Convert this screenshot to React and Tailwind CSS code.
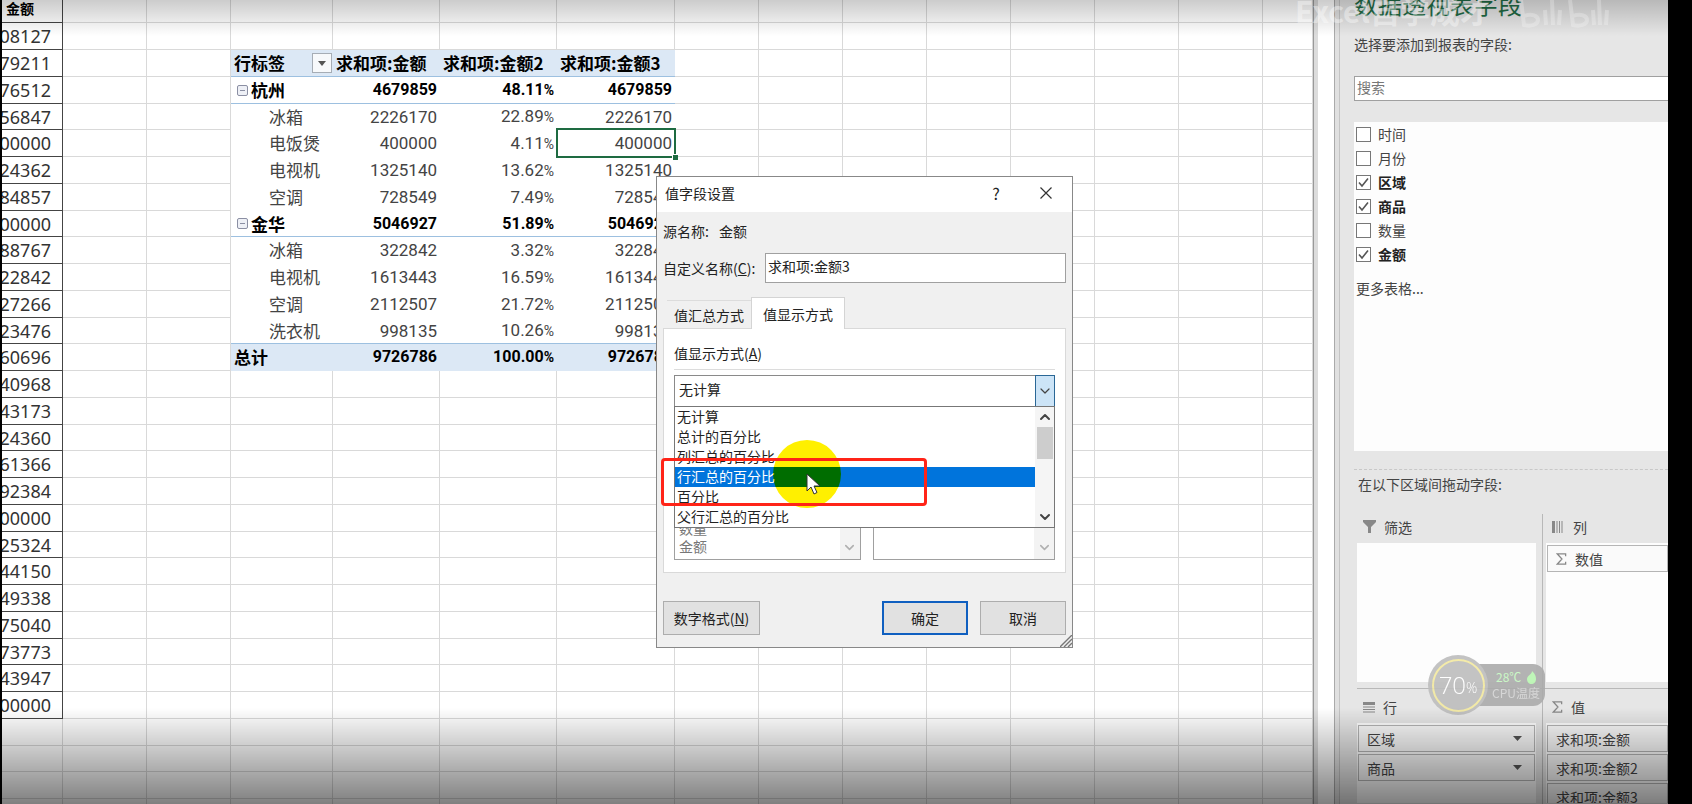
import { ChevronDown, ChevronUp } from "lucide-react";

const amounts = [
  "08127", "79211", "76512", "56847", "00000", "24362", "84857", "00000",
  "88767", "22842", "27266", "23476", "60696", "40968", "43173", "24360",
  "61366", "92384", "00000", "25324", "44150", "49338", "75040", "73773",
  "43947", "00000",
];

const pivot = [
  { label: "杭州", group: true, values: ["4679859", "48.11", "4679859"] },
  { label: "冰箱", values: ["2226170", "22.89", "2226170"] },
  { label: "电饭煲", values: ["400000", "4.11", "400000"], selected: true },
  { label: "电视机", values: ["1325140", "13.62", "1325140"] },
  { label: "空调", values: ["728549", "7.49", "728549"] },
  { label: "金华", group: true, values: ["5046927", "51.89", "5046927"] },
  { label: "冰箱", values: ["322842", "3.32", "322842"] },
  { label: "电视机", values: ["1613443", "16.59", "1613443"] },
  { label: "空调", values: ["2112507", "21.72", "2112507"] },
  { label: "洗衣机", values: ["998135", "10.26", "998135"] },
  { label: "总计", total: true, values: ["9726786", "100.00", "9726786"] },
];

const fields = [
  { name: "时间", checked: false },
  { name: "月份", checked: false },
  { name: "区域", checked: true },
  { name: "商品", checked: true },
  { name: "数量", checked: false },
  { name: "金额", checked: true },
];

const options = [
  "无计算",
  "总计的百分比",
  "列汇总的百分比",
  "行汇总的百分比",
  "百分比",
  "父行汇总的百分比",
];

const cell = "border-r border-b border-[#d9d9d9] p-0";

const EmptyCells = ({ count }) =>
  Array.from({ length: count }, (_, i) => <td key={i} className={cell}></td>);

const PivotHeader = () => (
  <>
    <th className="border-b border-[#9dc0e0] bg-[#dce8f5] p-0 pl-[3px] text-left">
      <div className="flex items-center justify-between">
        <span>行标签</span>
        <button
          aria-label="筛选行标签"
          className="mr-px flex size-5 items-center justify-center border border-[#a6adb5] bg-[#f7f9fb]"
        >
          <svg width="8" height="5" viewBox="0 0 8 5" fill="#555">
            <path d="M0 0h8L4 5z" />
          </svg>
        </button>
      </div>
    </th>
    {["求和项:金额", "求和项:金额2", "求和项:金额3"].map((name) => (
      <th
        key={name}
        className="border-b border-[#9dc0e0] bg-[#dce8f5] p-0 pl-[3px] text-left whitespace-nowrap"
      >
        {name}
      </th>
    ))}
  </>
);

const PivotRow = ({ row, beforeTotal }) => {
  const strong = row.group || row.total;
  let look = "p-0 border-b border-transparent text-[#444]";
  if (row.group) look = "p-0 border-b border-[#9dc0e0] font-bold text-black";
  if (row.total) look = "p-0 border-b border-[#dce8f5] bg-[#dce8f5] font-bold text-black";
  if (beforeTotal) look = "p-0 border-b border-[#9dc0e0] text-[#444]";

  return (
    <>
      <td className={look}>
        {row.group ? (
          <div className="flex items-center gap-[3px] pl-1.5">
            <svg width="11" height="11" viewBox="0 0 11 11" fill="#eef0f6" stroke="#8b8fa3">
              <rect x="0.5" y="0.5" width="10" height="10" rx="1.5" />
              <path d="M3 5.500h5" />
            </svg>
            {row.label}
          </div>
        ) : (
          <div className={row.total ? "pl-[3px]" : "pl-[38px]"}>{row.label}</div>
        )}
      </td>
      {row.values.map((value, i) => (
        <td key={i} className={`${look} relative text-right font-[Roboto]`}>
          <div className={strong ? "pr-[3px] text-base leading-6" : "pr-[3px]"}>
            {value}
            {i === 1 && <span className="text-sm leading-6">%</span>}
          </div>
          {row.selected && i === 2 && (
            <div className="absolute -inset-x-px -top-0.5 -bottom-0.5 border-2 border-[#1e6b41]">
              <span className="absolute -right-1 -bottom-1 size-1.5 border-t border-l border-white bg-[#1e6b41]"></span>
            </div>
          )}
        </td>
      ))}
    </>
  );
};

const Sheet = () => (
  <table className="w-full table-fixed border-separate border-spacing-0 bg-white text-[17px] leading-6">
    <colgroup>
      <col className="w-[61px]" />
      <col className="w-21" />
      <col className="w-21" />
      <col className="w-[102px]" />
      <col className="w-[107px]" />
      <col className="w-[117px]" />
      <col className="w-[118px]" />
      {Array.from({ length: 7 }, (_, i) => (
        <col key={i} className="w-21" />
      ))}
      <col />
    </colgroup>
    <tbody>
      <tr className="h-[23px]">
        <th className="border-r border-b border-[#444] p-0 text-left align-top">
          <div className="pl-1 text-sm leading-4">金额</div>
        </th>
        <EmptyCells count={14} />
      </tr>
      {Array.from({ length: 30 }, (_, i) => (
        <tr key={i} className="h-[27px] [&:nth-child(4n+1)]:h-[26px]">
          {amounts[i] ? (
            <td className="border-r border-b border-[#444] p-0 text-[#333]">
              <div className="flex justify-end overflow-hidden pr-[11px] font-['Noto_Sans'] text-lg leading-6">
                {amounts[i]}
              </div>
            </td>
          ) : (
            <EmptyCells count={1} />
          )}
          <EmptyCells count={2} />
          {i === 1 && <PivotHeader />}
          {pivot[i - 2] && <PivotRow row={pivot[i - 2]} beforeTotal={i === 11} />}
          <EmptyCells count={i > 0 && i < 13 ? 8 : 12} />
        </tr>
      ))}
    </tbody>
  </table>
);

const Dialog = () => (
  <div className="absolute top-44 left-[654px] w-[417px] border border-[#888] bg-[#f0f0f0] pb-3 text-sm leading-5 text-[#222]">
    <div className="flex h-[35px] items-center bg-white pb-1 pl-2">
      <h2 className="flex-1">值字段设置</h2>
      <button className="w-9 text-base">?</button>
      <button aria-label="关闭" className="mr-5 ml-[26px]">
        <svg width="12" height="12" viewBox="0 0 12 12" stroke="#333" strokeWidth="1.2">
          <path d="M0.5 0.5l11 11M11.5 0.5l-11 11" />
        </svg>
      </button>
    </div>
    <div className="px-1.5 pt-[9px]">
      <div className="flex gap-2.5">
        <span>源名称:</span>
        <span>金额</span>
      </div>
      <div className="mt-3 flex items-center gap-2">
        <label htmlFor="name" className="w-[94px] whitespace-nowrap">
          自定义名称(<u>C</u>):
        </label>
        <input
          id="name"
          defaultValue="求和项:金额3"
          className="h-[30px] min-w-0 flex-1 border border-[#a0a0a0] bg-white px-0.5 pb-1"
        />
      </div>
      <div className="mt-3.5 flex items-end pl-1">
        <button className="h-7 border-t border-[#dcdcdc] px-[7px]">值汇总方式</button>
        <button className="-mb-px h-8 border border-b-0 border-[#d4d4d4] bg-white px-[11px]">
          值显示方式
        </button>
      </div>
      <div className="border border-[#d9d9d9] bg-white px-2.5 pt-3.5 pb-3">
        <label htmlFor="show-as" className="block border-b border-[#dcdcdc] pb-1.5">
          值显示方式(<u>A</u>)
        </label>
        <div className="relative mt-[5px]">
          <select
            id="show-as"
            className="block h-8 w-full appearance-none border border-[#8a8a8a] bg-white px-1 pb-1"
          >
            <option>无计算</option>
          </select>
          <span className="pointer-events-none absolute top-0 right-0 flex h-8 w-5 items-center justify-center border border-[#2a6796] bg-[#cce4f7]">
            <ChevronDown size={16} strokeWidth={1.8} color="#444" />
          </span>
          <div className="absolute inset-x-0 top-[31px] z-10 flex border border-[#777] bg-white">
            <ul role="listbox" className="flex-1">
              {options.map((name, i) => (
                <li
                  key={name}
                  role="option"
                  aria-selected={i === 3}
                  className="h-5 px-0.5 leading-[18px] aria-selected:bg-[#0074dc] aria-selected:text-white"
                >
                  {name}
                </li>
              ))}
            </ul>
            <div className="flex w-[19px] flex-col items-center bg-[#f5f5f5]">
              <ChevronUp size={16} strokeWidth={3} color="#444" className="my-0.5" />
              <div className="h-8 w-4 bg-[#cdcdcd]"></div>
              <ChevronDown size={16} strokeWidth={3} color="#444" className="mt-auto mb-0.5" />
            </div>
          </div>
        </div>
        <div className="mt-12 flex gap-3 text-[#777]">
          <ul className="relative flex h-[105px] flex-1 flex-col justify-end border border-[#a0a0a0] pb-1 pl-1 leading-[18px]">
            <li>数量</li>
            <li>金额</li>
            <span className="absolute right-0 bottom-0 flex h-full w-5 items-end justify-center bg-[#f3f3f3] pb-1">
              <ChevronDown size={15} strokeWidth={2.5} color="#b0b0b0" />
            </span>
          </ul>
          <ul className="relative h-[105px] flex-1 border border-[#a0a0a0]">
            <span className="absolute right-0 bottom-0 flex h-full w-5 items-end justify-center bg-[#f3f3f3] pb-1">
              <ChevronDown size={15} strokeWidth={2.5} color="#b0b0b0" />
            </span>
          </ul>
        </div>
      </div>
      <div className="mt-7 flex gap-3">
        <button className="mr-auto h-[34px] w-[97px] border border-[#adadad] bg-[#e1e1e1]">
          数字格式(<u>N</u>)
        </button>
        <button className="h-[34px] w-[86px] border-2 border-[#0f5fc0] bg-[#e1e1e1]">确定</button>
        <button className="h-[34px] w-[86px] border border-[#adadad] bg-[#e1e1e1]">取消</button>
      </div>
    </div>
    <svg
      className="absolute right-0 bottom-0"
      width="12"
      height="12"
      viewBox="0 0 12 12"
      stroke="#777"
      strokeWidth="1.4"
    >
      <path d="M0 12L12 0M4 12l8-8M8 12l4-4" />
    </svg>

    {/* pointer highlight */}
    <div className="absolute top-[263px] left-[116px] z-20 size-[68px] rounded-full bg-[#fff000] mix-blend-multiply"></div>
    <div className="absolute top-[281px] left-1 z-20 h-12 w-[266px] rounded-sm border-3 border-[#ff2418]"></div>
    <svg
      className="absolute top-[296px] left-[149px] z-20"
      width="15"
      height="23"
      viewBox="0 0 15 23"
      fill="white"
      stroke="#333"
    >
      <path d="M1 1v17l4-4 3 7 3-1.500-3-6.500h6z" />
    </svg>
  </div>
);

const AreaItem = ({ children, arrow }) => (
  <li className="flex h-[27px] items-center border border-[#b5b5b5] bg-[#fafafa] px-2">
    {children}
    {arrow && (
      <svg className="mr-1 ml-auto" width="9" height="5" viewBox="0 0 9 5" fill="#555">
        <path d="M0 0h9L4.500 5z" />
      </svg>
    )}
  </li>
);

const Sigma = () => (
  <svg width="11" height="12" viewBox="0 0 12 13" fill="none" stroke="#888" strokeWidth="1.4">
    <path d="M10.500 3.500V1H1.500l5 5.500-5 5.500h9V9.500" />
  </svg>
);

const FieldPanel = () => (
  <aside className="flex w-[328px] shrink-0 flex-col bg-[#e6e6e6] pl-3.5 text-sm leading-5 text-[#444]">
    <h1 className="-mt-3 text-2xl leading-8 text-[#1f6b45]">数据透视表字段</h1>
    <p className="mt-3.5">选择要添加到报表的字段:</p>
    <input
      aria-label="搜索"
      placeholder="搜索"
      className="mt-[22px] h-[25px] border border-r-0 border-[#a0a0a0] bg-white px-0.5 pb-1 placeholder:text-[#777]"
    />
    <div className="mt-[21px] h-[329px] bg-[#fdfdfd] px-0.5">
      {fields.map(({ name, checked }) => (
        <label
          key={name}
          className="flex h-6 items-center gap-[7px] has-checked:font-bold has-checked:text-[#222]"
        >
          <span className="relative flex size-[15px]">
            <input
              type="checkbox"
              defaultChecked={checked}
              className="peer size-[15px] appearance-none border border-[#777] bg-white"
            />
            <svg
              className="pointer-events-none absolute inset-0 hidden peer-checked:block"
              width="15"
              height="15"
              viewBox="0 0 15 15"
              fill="none"
              stroke="#555"
              strokeWidth="1.6"
            >
              <path d="M3 7.500l3 3.500 6-7.500" />
            </svg>
          </span>
          {name}
        </label>
      ))}
      <p className="mt-3">更多表格...</p>
    </div>
    <div className="mt-[18px] border-t border-dashed border-[#c8c8c8] pt-1 pl-1">
      在以下区域间拖动字段:
    </div>
    <div className="mt-5 ml-[3px] grid flex-1 grid-cols-[186px_1fr] grid-rows-[175px_1fr]">
      <section className="border-r border-b border-[#b8b8b8] pr-1.5">
        <h3 className="flex h-[29px] items-center gap-2 pb-1 pl-1.5">
          <svg width="13" height="13" viewBox="0 0 13 13" fill="#888">
            <path d="M0 0h13v2L8 7v6H5V7L0 2z" />
          </svg>
          筛选
        </h3>
        <div className="h-[139px] bg-[#fdfdfd]"></div>
      </section>
      <section className="border-b border-[#b8b8b8] pl-[3px]">
        <h3 className="flex h-[29px] items-center gap-2.5 pb-1 pl-1.5">
          <svg width="11" height="12" viewBox="0 0 11 12" fill="#888">
            <path d="M0 0h3v12H0zM4.500 0h1v12h-1zM7 0h1v12H7zM9.500 0h1v12h-1z" />
          </svg>
          列
        </h3>
        <ul className="h-[139px] bg-[#fdfdfd] pt-0.5 pl-px">
          <AreaItem>
            <span className="mr-2">
              <Sigma />
            </span>
            数值
          </AreaItem>
        </ul>
      </section>
      <section className="border-r border-[#b8b8b8] pr-1.5">
        <h3 className="flex h-[34px] items-center gap-2 pt-0.5 pl-1.5">
          <svg width="12" height="11" viewBox="0 0 12 11" fill="#888">
            <path d="M0 0h12v3H0zM0 4.500h12v1H0zM0 7h12v1H0zM0 9.500h12v1H0z" />
          </svg>
          行
        </h3>
        <ul className="flex h-20 flex-col gap-0.5 bg-[#fdfdfd] px-px pt-0.5">
          <AreaItem arrow>区域</AreaItem>
          <AreaItem arrow>商品</AreaItem>
        </ul>
      </section>
      <section className="pl-[3px]">
        <h3 className="flex h-[34px] items-center gap-2 pt-0.5 pl-1.5">
          <Sigma />
          值
        </h3>
        <ul className="flex h-20 flex-col gap-0.5 overflow-hidden bg-[#fdfdfd] pt-0.5 pl-px *:shrink-0">
          <AreaItem>求和项:金额</AreaItem>
          <AreaItem>求和项:金额2</AreaItem>
          <AreaItem>求和项:金额3</AreaItem>
        </ul>
      </section>
    </div>
  </aside>
);

const CpuWidget = () => (
  <div className="absolute top-[655px] right-[123px] flex items-center opacity-90">
    <div className="z-10 flex size-[60px] items-center justify-center rounded-full bg-[#bdbdbd]">
      <div className="flex size-[53px] items-center justify-center rounded-full border-2 border-[#f3e9a0] font-['Open_Sans'] text-2xl font-light text-white">
        70<span className="mt-1.5 text-sm">%</span>
      </div>
    </div>
    <div className="-ml-6 flex h-[42px] w-[81px] flex-col justify-center rounded-r-xl bg-[#ababab] pl-7 text-xs leading-4 text-[#d4d4d4]">
      <span className="flex items-center gap-1.5 pl-1 text-[#c5f7c0]">
        28℃
        <svg width="9" height="13" viewBox="0 0 9 13" fill="#b8f5b0">
          <path d="M5 0c3 3 4 5 4 8 0 3-2 5-4.500 5S0 11 0 8c0-2 1.500-3 3-4.500C4 2.500 5 1.500 5 0z" />
        </svg>
      </span>
      <span className="whitespace-nowrap">CPU温度</span>
    </div>
  </div>
);

const Watermark = () => (
  <div className="pointer-events-none absolute -top-2 right-[58px] flex items-end gap-7 text-3xl leading-9 font-bold whitespace-nowrap text-white/40">
    <span>Excel自学成才</span>
    <svg
      width="92"
      height="30"
      viewBox="0 0 92 30"
      fill="none"
      stroke="white"
      strokeOpacity="0.25"
      strokeWidth="4"
    >
      <path d="M3 2l3 25c8 2 14-1 14-5s-6-7-14-4M27 12l1 15M34 2l1 25M42 12l-1 15" />
      <path d="M52 2l3 25c8 2 14-1 14-5s-6-7-14-4M75 12l1 15M81 2l1 25M89 12l-1 15" />
    </svg>
  </div>
);

const App = () => {
  return (
    <div className="relative flex h-screen overflow-hidden border-l-2 border-black bg-black font-['Noto_Sans_CJK_SC',sans-serif]">
      <main className="relative flex min-w-0 flex-1 overflow-hidden bg-white">
        <div className="min-w-0 flex-1">
          <Sheet />
        </div>
        <div className="w-[5px] border-l border-[#999] bg-[#dcdcdc]"></div>
        <div className="w-4 bg-white"></div>
        <div className="w-1.5 border-x border-l-[#aaa] border-r-[#c4c4c4] bg-[#e0e0e0]"></div>
        <FieldPanel />
        <CpuWidget />
        <div className="pointer-events-none absolute inset-x-0 top-0 h-9 bg-linear-to-b from-black/20 to-transparent"></div>
        <div className="pointer-events-none absolute inset-x-0 bottom-0 h-24 bg-linear-to-b from-transparent to-black/50"></div>
        <Watermark />
      </main>
      <Dialog />
      <div className="w-6 shrink-0 bg-black"></div>
    </div>
  );
};

export default App;
